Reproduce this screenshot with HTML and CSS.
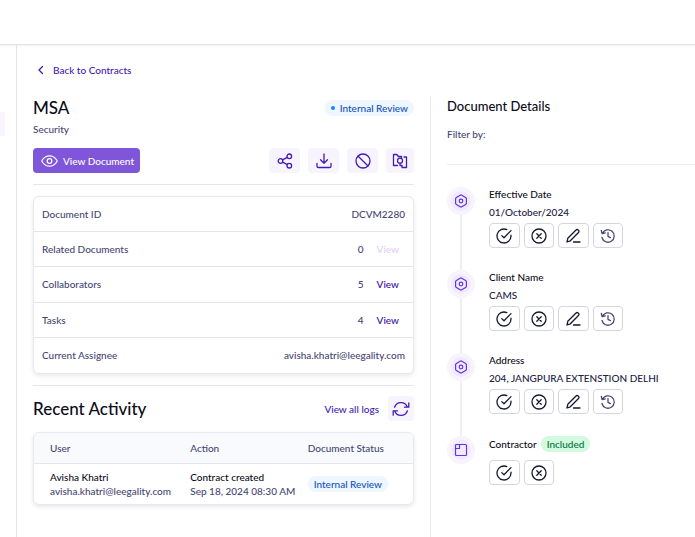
FILE: index.html
```
<!DOCTYPE html>
<html lang="en">
<head>
<meta charset="utf-8">
<meta name="viewport" content="width=device-width, initial-scale=1">
<title>MSA</title>
<link rel="stylesheet" href="styles.css">
</head>
<body>
<svg class="sprite" aria-hidden="true">
  <symbol id="check" viewBox="0 0 16 16"><path d="M15 7.2V8a7 7 0 1 1-4.2-6.4M15 2.6 8 9.8 5.8 7.6"/></symbol>
  <symbol id="cross" viewBox="0 0 16 16"><circle cx="8" cy="8" r="7"/><path d="m5.8 5.8 4.4 4.4m0-4.4-4.4 4.4"/></symbol>
  <symbol id="edit" viewBox="0 0 16 16"><path d="M8.5 14H15M2 14l.8-3.7L11 2a1.5 1.5 0 0 1 2.2 0l.3.3a1.5 1.5 0 0 1 0 2.2L5.3 12.8 2 14Z"/></symbol>
  <symbol id="history" viewBox="0 0 16 16"><path d="M2.3 5.6A6.2 6.2 0 1 1 2 9.5M1.3 2.5l.8 3.2 3.2-.8M8 4.6v3.8l2.4 1.2"/></symbol>
  <symbol id="hexagon" viewBox="0 0 14 14"><path d="M6.2 1.2a1.6 1.6 0 0 1 1.6 0l3.8 2.2c.5.3.8.8.8 1.4v4.4c0 .6-.3 1.1-.8 1.4l-3.8 2.2a1.6 1.6 0 0 1-1.6 0L2.4 10.6c-.5-.3-.8-.8-.8-1.4V4.8c0-.6.3-1.1.8-1.4Z"/><circle cx="7" cy="7" r="1.8"/></symbol>
</svg>
<header class="topbar"></header>
<div class="shell">
  <nav class="rail" aria-label="Sections"><span class="rail-active"></span></nav>
  <main class="page">
    <a class="back" href="#"><svg class="chevron" viewBox="0 0 8 10"><path d="M5.5 1.5 2 5l3.5 3.5"/></svg>Back to Contracts</a>
    <div class="columns">
      <section class="contract">
        <div class="title-row">
          <h1>MSA</h1>
          <span class="badge review"><i class="dot"></i>Internal Review</span>
        </div>
        <p class="subtitle">Security</p>
        <div class="toolbar">
          <button class="primary" type="button"><svg class="eye" viewBox="0 0 18 14"><path d="M1.2 7.8a1.5 1.5 0 0 1 0-1.6C3 3.3 5.8 1.5 9 1.5s6 1.8 7.8 4.7a1.5 1.5 0 0 1 0 1.6C15 10.7 12.2 12.5 9 12.5S3 10.7 1.2 7.8Z"/><circle cx="9" cy="7" r="2.5"/></svg>View Document</button>
          <div class="tools">
            <button class="tool" type="button" aria-label="Share"><svg viewBox="0 0 16 16"><circle cx="3.5" cy="8" r="2.3"/><circle cx="12.3" cy="3.3" r="2.3"/><circle cx="12.3" cy="12.7" r="2.3"/><path d="m5.6 6.9 4.7-2.5M5.6 9.1l4.7 2.5"/></svg></button>
            <button class="tool" type="button" aria-label="Download"><svg viewBox="0 0 16 16"><path d="M8 1v9M4.5 6.7 8 10.2l3.5-3.5M1 10.5v2.7c0 .8.5 1.3 1.3 1.3h11.4c.8 0 1.3-.5 1.3-1.3v-2.7"/></svg></button>
            <button class="tool" type="button" aria-label="Cancel"><svg viewBox="0 0 16 16"><circle cx="8" cy="8" r="7"/><path d="m3.2 3.2 9.6 9.6"/></svg></button>
            <button class="tool" type="button" aria-label="Compare"><svg viewBox="0 0 16 16"><path d="M5.5 12.5h-4v-11h3.3l1.5 2h3.2V5M8 10.3v2.2h2v2h4.5V4H12"/><circle cx="8" cy="7.7" r="2.5"/></svg></button>
          </div>
        </div>
        <dl class="card facts">
          <div><dt>Document ID</dt><dd>DCVM2280</dd></div>
          <div><dt>Related Documents</dt><dd>0<button class="link" type="button" disabled>View</button></dd></div>
          <div><dt>Collaborators</dt><dd>5<button class="link" type="button">View</button></dd></div>
          <div><dt>Tasks</dt><dd>4<button class="link" type="button">View</button></dd></div>
          <div><dt>Current Assignee</dt><dd>avisha.khatri@leegality.com</dd></div>
        </dl>
        <div class="activity-head">
          <h2>Recent Activity</h2>
          <a class="logs" href="#">View all logs</a>
          <button class="tool" type="button" aria-label="Refresh"><svg class="refresh" viewBox="0 0 18 16"><path d="M2.6 6.2A6.7 6.7 0 0 1 15.3 6M16.8 1.8v4.4h-4.3M15.4 9.8A6.7 6.7 0 0 1 2.7 10M1.2 14.2V9.8h4.3"/></svg></button>
        </div>
        <div class="card log">
          <table>
            <thead><tr><th>User</th><th>Action</th><th>Document Status</th></tr></thead>
            <tbody><tr>
              <td><strong>Avisha Khatri</strong>avisha.khatri@leegality.com</td>
              <td><strong>Contract created</strong>Sep 18, 2024 08:30 AM</td>
              <td><span class="badge review">Internal Review</span></td>
            </tr></tbody>
          </table>
        </div>
      </section>
      <aside class="details">
        <h3>Document Details</h3>
        <p class="filter">Filter by:</p>
        <ol class="timeline">
          <li>
            <span class="node"><svg viewBox="0 0 14 14"><use href="#hexagon"/></svg></span>
            <div class="entry"><h4>Effective Date</h4><p>01/October/2024</p>
              <div class="actions">
                <button type="button" aria-label="Approve"><svg><use href="#check"/></svg></button>
                <button type="button" aria-label="Reject"><svg><use href="#cross"/></svg></button>
                <button type="button" aria-label="Edit"><svg><use href="#edit"/></svg></button>
                <button class="muted" type="button" aria-label="History"><svg><use href="#history"/></svg></button>
              </div></div>
          </li>
          <li>
            <span class="node"><svg viewBox="0 0 14 14"><use href="#hexagon"/></svg></span>
            <div class="entry"><h4>Client Name</h4><p>CAMS</p>
              <div class="actions">
                <button type="button" aria-label="Approve"><svg><use href="#check"/></svg></button>
                <button type="button" aria-label="Reject"><svg><use href="#cross"/></svg></button>
                <button type="button" aria-label="Edit"><svg><use href="#edit"/></svg></button>
                <button class="muted" type="button" aria-label="History"><svg><use href="#history"/></svg></button>
              </div></div>
          </li>
          <li>
            <span class="node"><svg viewBox="0 0 14 14"><use href="#hexagon"/></svg></span>
            <div class="entry"><h4>Address</h4><p>204, JANGPURA EXTENSTION DELHI</p>
              <div class="actions">
                <button type="button" aria-label="Approve"><svg><use href="#check"/></svg></button>
                <button type="button" aria-label="Reject"><svg><use href="#cross"/></svg></button>
                <button type="button" aria-label="Edit"><svg><use href="#edit"/></svg></button>
                <button class="muted" type="button" aria-label="History"><svg><use href="#history"/></svg></button>
              </div></div>
          </li>
          <li>
            <span class="node"><svg viewBox="0 0 14 14"><rect x="1.5" y="1.5" width="11" height="11" rx="1"/><path d="M5.5 2v3.5H2"/></svg></span>
            <div class="entry"><h4 class="tagged">Contractor <span class="badge included">Included</span></h4>
              <div class="actions">
                <button type="button" aria-label="Approve"><svg><use href="#check"/></svg></button>
                <button type="button" aria-label="Reject"><svg><use href="#cross"/></svg></button>
              </div></div>
          </li>
        </ol>
      </aside>
    </div>
  </main>
</div>
</body>
</html>
```
FILE: styles.css
```
* { box-sizing: border-box; }
body {
  margin: 0;
  min-height: 100vh;
  display: flex;
  flex-direction: column;
  background: #fff;
  color: #464672;
  font: 500 10px/14px Lato, "Liberation Sans", sans-serif;
}
h1, h2, h3, h4, p, dl, dd, ol { margin: 0; padding: 0; font-weight: 500; }
button { font: inherit; padding: 0; border: 0; background: none; cursor: pointer; }
a { text-decoration: none; }
svg { display: block; fill: none; stroke: currentColor; stroke-width: 1.3; stroke-linecap: round; stroke-linejoin: round; }
.sprite { position: absolute; width: 0; height: 0; }

.topbar { height: 45px; border-bottom: 1px solid #e4e4ea; box-shadow: 0 1px 1px #f3f3f6; }
.shell { flex: 1; display: flex; }
.rail { width: 17px; padding-top: 67px; border-right: 1px solid #e4e4ea; }
.rail-active { display: block; width: 5px; height: 24px; background: #f8f3ff; }
.page { flex: 1; min-width: 0; display: flex; flex-direction: column; padding-top: 18px; }
.back { display: flex; align-items: center; gap: 8px; margin-left: 20px; color: #431bb5; }
.chevron { width: 8px; height: 10px; }
.columns { flex: 1; display: grid; grid-template-columns: 414fr 264fr; margin-top: 19px; }

.contract { padding: 0 16px 16px; border-right: 1px solid #e9e9ee; }
.title-row { display: flex; justify-content: space-between; align-items: center; height: 24px; }
h1, h2 { color: #0c0c18; font-size: 17px; line-height: 24px; }
.badge { display: inline-flex; align-items: center; height: 16px; padding: 0 6px; border-radius: 8px; white-space: nowrap; }
.review { background: #eef7ff; color: #1250bd; }
.dot { width: 4px; height: 4px; margin-right: 5px; border-radius: 50%; background: #1687ff; }
.subtitle { margin-top: 2px; }
.toolbar { display: flex; justify-content: space-between; margin-top: 12px; padding-bottom: 11px; border-bottom: 1px solid #e6e6ea; }
.primary { display: flex; align-items: center; gap: 5px; height: 25px; padding: 0 6px 0 8px; border-radius: 4px; background: #7f56d9; color: #fff; }
.eye { width: 17px; height: 14px; }
.tools { display: flex; gap: 8px; }
.tool { display: grid; place-items: center; width: 31px; height: 25px; border-radius: 4px; background: #f8f4ff; color: #431bb5; }
.tools .tool:last-child { width: 28px; }
.tool svg { width: 16px; height: 16px; }

.card { border: 1px solid #e8e8ed; border-radius: 6px; box-shadow: 0 2px 4px #10184018; overflow: hidden; }
.facts { display: grid; grid-auto-rows: 1fr; min-height: 178px; margin-top: 11px; }
.facts div { display: flex; justify-content: space-between; align-items: center; padding: 0 8px; }
.facts div:not(:last-child) { border-bottom: 1px solid #e6e6ea; }
.facts dd { display: flex; }
.link { margin: 0 6px 0 13px; color: #3a0ca8; }
.link:disabled { color: #e4cdfb; cursor: default; }

.activity-head { display: flex; align-items: center; margin-top: 11px; padding: 10px 0 11px; border-top: 1px solid #e6e6ea; }
.activity-head h2 { flex: 1; }
.activity-head .tool { width: 26px; margin-left: 9px; }
.logs { color: #431bb5; }
.activity-head .refresh { width: 18px; }
table { width: 100%; border-collapse: collapse; table-layout: fixed; }
th, td { padding: 0 0 0 16px; text-align: left; font-weight: 500; white-space: nowrap; }
th { height: 30px; background: #f8fafc; border-bottom: 1px solid #e6e6ea; }
th:first-child { width: 37%; }
th:nth-child(2) { width: 31%; }
td { height: 41px; }
td strong { display: block; color: #0c0c18; font-weight: 500; }

.details { padding-left: 16px; }
h3 { color: #0c0c18; font-size: 13px; line-height: 20px; }
.filter { margin-top: 11px; padding-bottom: 23px; border-bottom: 1px solid #ececf0; }
.timeline { list-style: none; margin-top: 22px; }
.timeline li { display: flex; gap: 14px; min-height: 83px; }
.node { display: flex; flex-direction: column; align-items: center; width: 28px; color: #6134dc; }
.node svg { flex: none; width: 28px; height: 28px; padding: 3px; border: 4px solid #f8f4ff; border-radius: 50%; background: #f1eaff; stroke-width: 1.2; overflow: visible; }
.node::after { content: ""; flex: 1; width: 2px; background: #efeff2; }
.timeline li:last-child .node::after { content: none; }
h4 { color: #0c0c18; font-size: 10px; line-height: 14px; }
.entry p { margin-top: 4px; color: #22223f; }
.tagged { display: flex; align-items: center; gap: 4px; height: 16px; margin-bottom: 8px; }
.included { background: #d1fadf; color: #06733e; }
.actions { display: grid; grid-template-columns: repeat(4, 1fr); gap: 4px; width: 134px; margin-top: 4px; }
.actions button { display: grid; place-items: center; height: 25px; border: 1px solid #d5d5e0; border-radius: 4px; color: #17172f; }
.actions svg { width: 16px; height: 16px; }
.actions .muted { color: #464672; }
```
